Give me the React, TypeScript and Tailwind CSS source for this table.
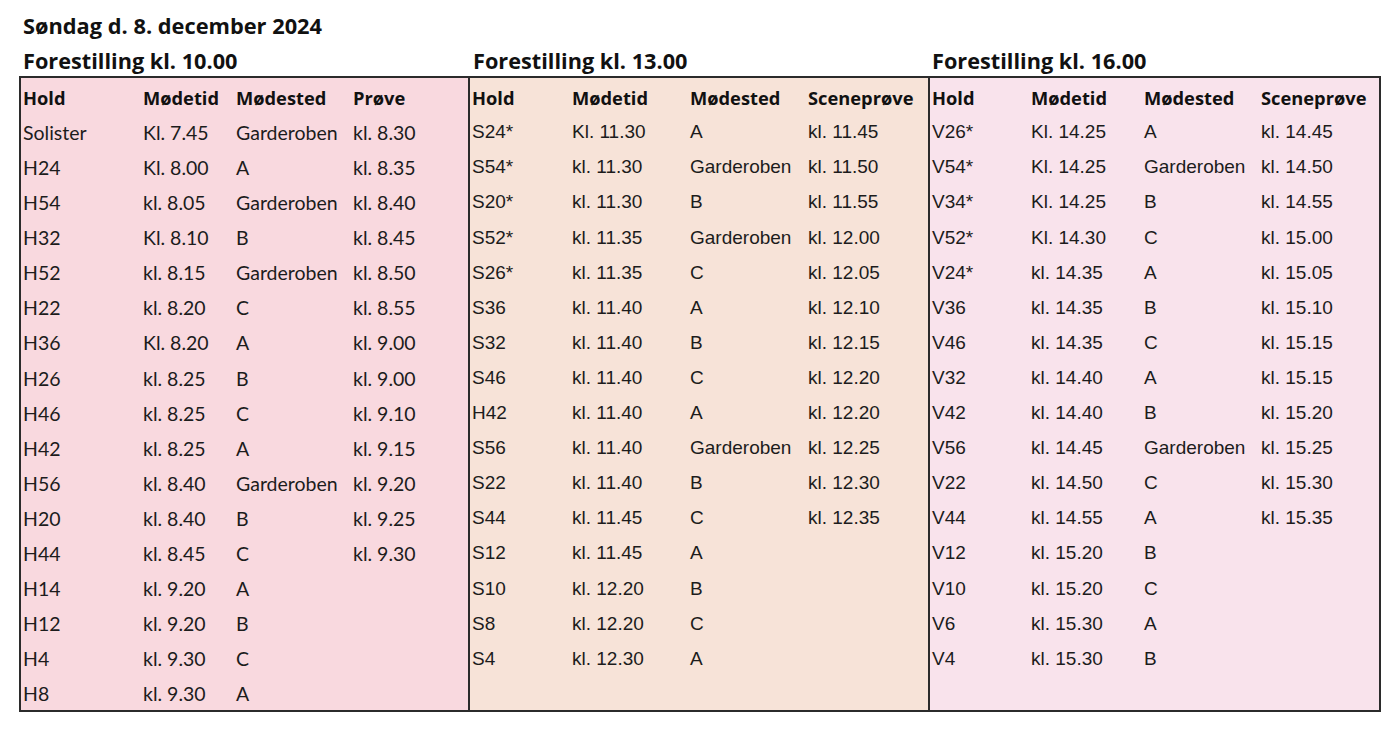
type Row = [string, string, string, string?];

const early: Row[] = [
  ["Solister", "Kl. 7.45", "Garderoben", "kl. 8.30"],
  ["H24", "Kl. 8.00", "A", "kl. 8.35"],
  ["H54", "kl. 8.05", "Garderoben", "kl. 8.40"],
  ["H32", "Kl. 8.10", "B", "kl. 8.45"],
  ["H52", "kl. 8.15", "Garderoben", "kl. 8.50"],
  ["H22", "kl. 8.20", "C", "kl. 8.55"],
  ["H36", "Kl. 8.20", "A", "kl. 9.00"],
  ["H26", "kl. 8.25", "B", "kl. 9.00"],
  ["H46", "kl. 8.25", "C", "kl. 9.10"],
  ["H42", "kl. 8.25", "A", "kl. 9.15"],
  ["H56", "kl. 8.40", "Garderoben", "kl. 9.20"],
  ["H20", "kl. 8.40", "B", "kl. 9.25"],
  ["H44", "kl. 8.45", "C", "kl. 9.30"],
  ["H14", "kl. 9.20", "A"],
  ["H12", "kl. 9.20", "B"],
  ["H4", "kl. 9.30", "C"],
  ["H8", "kl. 9.30", "A"],
];

const midday: Row[] = [
  ["S24*", "Kl. 11.30", "A", "kl. 11.45"],
  ["S54*", "kl. 11.30", "Garderoben", "kl. 11.50"],
  ["S20*", "kl. 11.30", "B", "kl. 11.55"],
  ["S52*", "kl. 11.35", "Garderoben", "kl. 12.00"],
  ["S26*", "kl. 11.35", "C", "kl. 12.05"],
  ["S36", "kl. 11.40", "A", "kl. 12.10"],
  ["S32", "kl. 11.40", "B", "kl. 12.15"],
  ["S46", "kl. 11.40", "C", "kl. 12.20"],
  ["H42", "kl. 11.40", "A", "kl. 12.20"],
  ["S56", "kl. 11.40", "Garderoben", "kl. 12.25"],
  ["S22", "kl. 11.40", "B", "kl. 12.30"],
  ["S44", "kl. 11.45", "C", "kl. 12.35"],
  ["S12", "kl. 11.45", "A"],
  ["S10", "kl. 12.20", "B"],
  ["S8", "kl. 12.20", "C"],
  ["S4", "kl. 12.30", "A"],
];

const late: Row[] = [
  ["V26*", "Kl. 14.25", "A", "kl. 14.45"],
  ["V54*", "Kl. 14.25", "Garderoben", "kl. 14.50"],
  ["V34*", "Kl. 14.25", "B", "kl. 14.55"],
  ["V52*", "Kl. 14.30", "C", "kl. 15.00"],
  ["V24*", "kl. 14.35", "A", "kl. 15.05"],
  ["V36", "kl. 14.35", "B", "kl. 15.10"],
  ["V46", "kl. 14.35", "C", "kl. 15.15"],
  ["V32", "kl. 14.40", "A", "kl. 15.15"],
  ["V42", "kl. 14.40", "B", "kl. 15.20"],
  ["V56", "kl. 14.45", "Garderoben", "kl. 15.25"],
  ["V22", "kl. 14.50", "C", "kl. 15.30"],
  ["V44", "kl. 14.55", "A", "kl. 15.35"],
  ["V12", "kl. 15.20", "B"],
  ["V10", "kl. 15.20", "C"],
  ["V6", "kl. 15.30", "A"],
  ["V4", "kl. 15.30", "B"],
];

const heading = "font-['Open_Sans','Liberation_Sans',sans-serif] font-bold text-[#111]";

function Panel({ title, rows, last, cols, panelClass, headerPad, bodyFont }: {
  title: string; rows: Row[]; last: string; cols: string; panelClass: string; headerPad: string; bodyFont: string;
}) {
  return (
    <div className="flex flex-col">
      <div className={`h-[32px] pt-[2px] flex items-center text-[21.7px] ${heading} ${headerPad}`}>{title}</div>
      <div className={`h-[636px] pt-[2px] border-[#2b2b2b] ${panelClass}`}>
        <div className={`grid ${cols} h-[35px] items-center pl-[2px] text-[18.3px] ${heading}`}>
          <span>Hold</span><span>Mødetid</span><span>Mødested</span><span>{last}</span>
        </div>
        {rows.map((r, i) => (
          <div key={i} className={`grid ${cols} h-[35.1px] items-center pl-[2px] text-[#1c1c1c] ${bodyFont}`}>
            <span>{r[0]}</span><span>{r[1]}</span><span className="whitespace-nowrap">{r[2]}</span><span>{r[3] ?? ""}</span>
          </div>
        ))}
      </div>
    </div>
  );
}

export default function App() {
  return (
    <div className="w-[1400px] h-[729px] bg-white pt-[8px] pl-[19px]">
      <div className={`h-[36px] pl-[4px] flex items-center text-[21.8px] ${heading}`}>Søndag d. 8. december 2024</div>
      <div className="flex">
        <div className="w-[451px]">
          <Panel title="Forestilling kl. 10.00" rows={early} last="Prøve" cols="grid-cols-[120px_93px_117px_1fr]"
            panelClass="border-2 bg-[#f9d9df]" headerPad="pl-[4px]" bodyFont="text-[19.5px] font-['Lato','Liberation_Sans',sans-serif]" />
        </div>
        <div className="w-[460px]">
          <Panel title="Forestilling kl. 13.00" rows={midday} last="Sceneprøve" cols="grid-cols-[100px_118px_118px_1fr]"
            panelClass="border-y-2 border-r-2 bg-[#f7e3d8]" headerPad="pl-[3px]" bodyFont="text-[19px] font-['Liberation_Sans',Arial,sans-serif]" />
        </div>
        <div className="w-[451px]">
          <Panel title="Forestilling kl. 16.00" rows={late} last="Sceneprøve" cols="grid-cols-[99px_113px_117px_1fr]"
            panelClass="border-y-2 border-r-2 bg-[#f9e3ec]" headerPad="pl-[2px]" bodyFont="text-[19px] font-['Liberation_Sans',Arial,sans-serif]" />
        </div>
      </div>
    </div>
  );
}
